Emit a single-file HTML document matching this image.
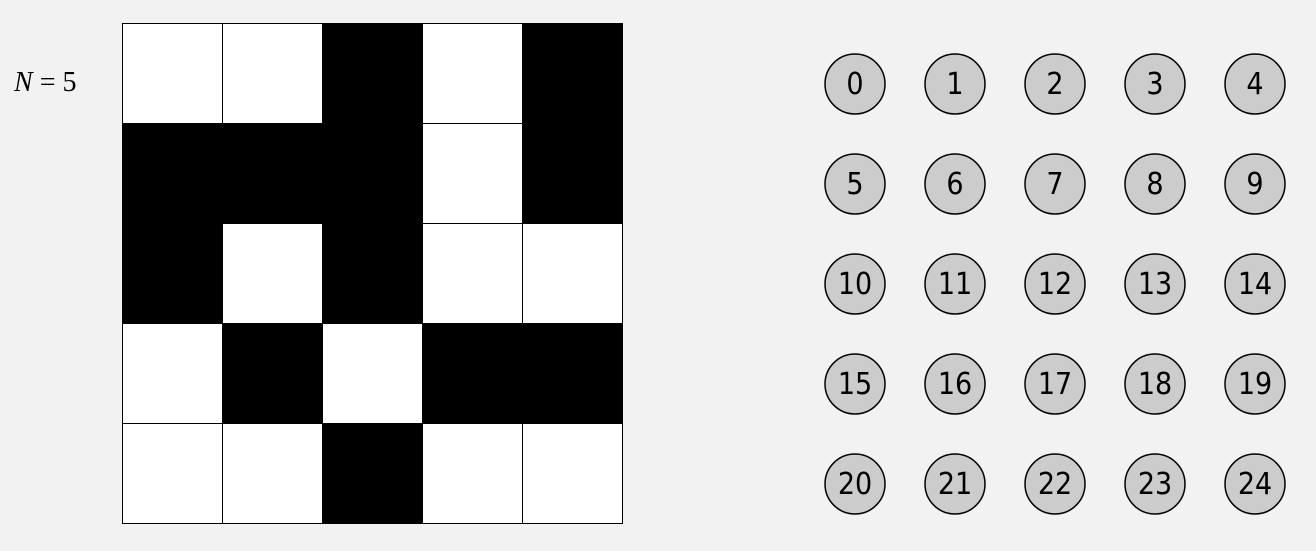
<!DOCTYPE html>
<html><head><style>body{margin:0;background:#f2f2f2}
.n{font-family:"DejaVu Sans Condensed","DejaVu Sans",sans-serif;font-size:30px;text-anchor:middle}
.l{font-family:"Liberation Serif",serif;font-size:28px}
</style></head><body>
<svg width="1316" height="551" xmlns="http://www.w3.org/2000/svg" style="display:block">
<rect width="1316" height="551" fill="#f2f2f2"/>
<text class="l" x="14" y="91"><tspan font-style="italic">N</tspan> = 5</text>
<g stroke="#000" stroke-width="1">
<rect x="122.5" y="23.5" width="100" height="100" fill="#fff"/><rect x="222.5" y="23.5" width="100" height="100" fill="#fff"/><rect x="322.5" y="23.5" width="100" height="100" fill="#000"/><rect x="422.5" y="23.5" width="100" height="100" fill="#fff"/><rect x="522.5" y="23.5" width="100" height="100" fill="#000"/>
<rect x="122.5" y="123.5" width="100" height="100" fill="#000"/><rect x="222.5" y="123.5" width="100" height="100" fill="#000"/><rect x="322.5" y="123.5" width="100" height="100" fill="#000"/><rect x="422.5" y="123.5" width="100" height="100" fill="#fff"/><rect x="522.5" y="123.5" width="100" height="100" fill="#000"/>
<rect x="122.5" y="223.5" width="100" height="100" fill="#000"/><rect x="222.5" y="223.5" width="100" height="100" fill="#fff"/><rect x="322.5" y="223.5" width="100" height="100" fill="#000"/><rect x="422.5" y="223.5" width="100" height="100" fill="#fff"/><rect x="522.5" y="223.5" width="100" height="100" fill="#fff"/>
<rect x="122.5" y="323.5" width="100" height="100" fill="#fff"/><rect x="222.5" y="323.5" width="100" height="100" fill="#000"/><rect x="322.5" y="323.5" width="100" height="100" fill="#fff"/><rect x="422.5" y="323.5" width="100" height="100" fill="#000"/><rect x="522.5" y="323.5" width="100" height="100" fill="#000"/>
<rect x="122.5" y="423.5" width="100" height="100" fill="#fff"/><rect x="222.5" y="423.5" width="100" height="100" fill="#fff"/><rect x="322.5" y="423.5" width="100" height="100" fill="#000"/><rect x="422.5" y="423.5" width="100" height="100" fill="#fff"/><rect x="522.5" y="423.5" width="100" height="100" fill="#fff"/>
</g>
<g stroke="#000" stroke-width="1.5" fill="#cccccc">
<circle cx="855" cy="84" r="30"/><circle cx="955" cy="84" r="30"/><circle cx="1055" cy="84" r="30"/><circle cx="1155" cy="84" r="30"/><circle cx="1255" cy="84" r="30"/>
<circle cx="855" cy="184" r="30"/><circle cx="955" cy="184" r="30"/><circle cx="1055" cy="184" r="30"/><circle cx="1155" cy="184" r="30"/><circle cx="1255" cy="184" r="30"/>
<circle cx="855" cy="284" r="30"/><circle cx="955" cy="284" r="30"/><circle cx="1055" cy="284" r="30"/><circle cx="1155" cy="284" r="30"/><circle cx="1255" cy="284" r="30"/>
<circle cx="855" cy="384" r="30"/><circle cx="955" cy="384" r="30"/><circle cx="1055" cy="384" r="30"/><circle cx="1155" cy="384" r="30"/><circle cx="1255" cy="384" r="30"/>
<circle cx="855" cy="484" r="30"/><circle cx="955" cy="484" r="30"/><circle cx="1055" cy="484" r="30"/><circle cx="1155" cy="484" r="30"/><circle cx="1255" cy="484" r="30"/>
</g>
<g class="n" fill="#000">
<text x="855" y="94">0</text><text x="955" y="94">1</text><text x="1055" y="94">2</text><text x="1155" y="94">3</text><text x="1255" y="94">4</text>
<text x="855" y="194">5</text><text x="955" y="194">6</text><text x="1055" y="194">7</text><text x="1155" y="194">8</text><text x="1255" y="194">9</text>
<text x="855" y="294">10</text><text x="955" y="294">11</text><text x="1055" y="294">12</text><text x="1155" y="294">13</text><text x="1255" y="294">14</text>
<text x="855" y="394">15</text><text x="955" y="394">16</text><text x="1055" y="394">17</text><text x="1155" y="394">18</text><text x="1255" y="394">19</text>
<text x="855" y="494">20</text><text x="955" y="494">21</text><text x="1055" y="494">22</text><text x="1155" y="494">23</text><text x="1255" y="494">24</text>
</g>
</svg>
</body></html>
